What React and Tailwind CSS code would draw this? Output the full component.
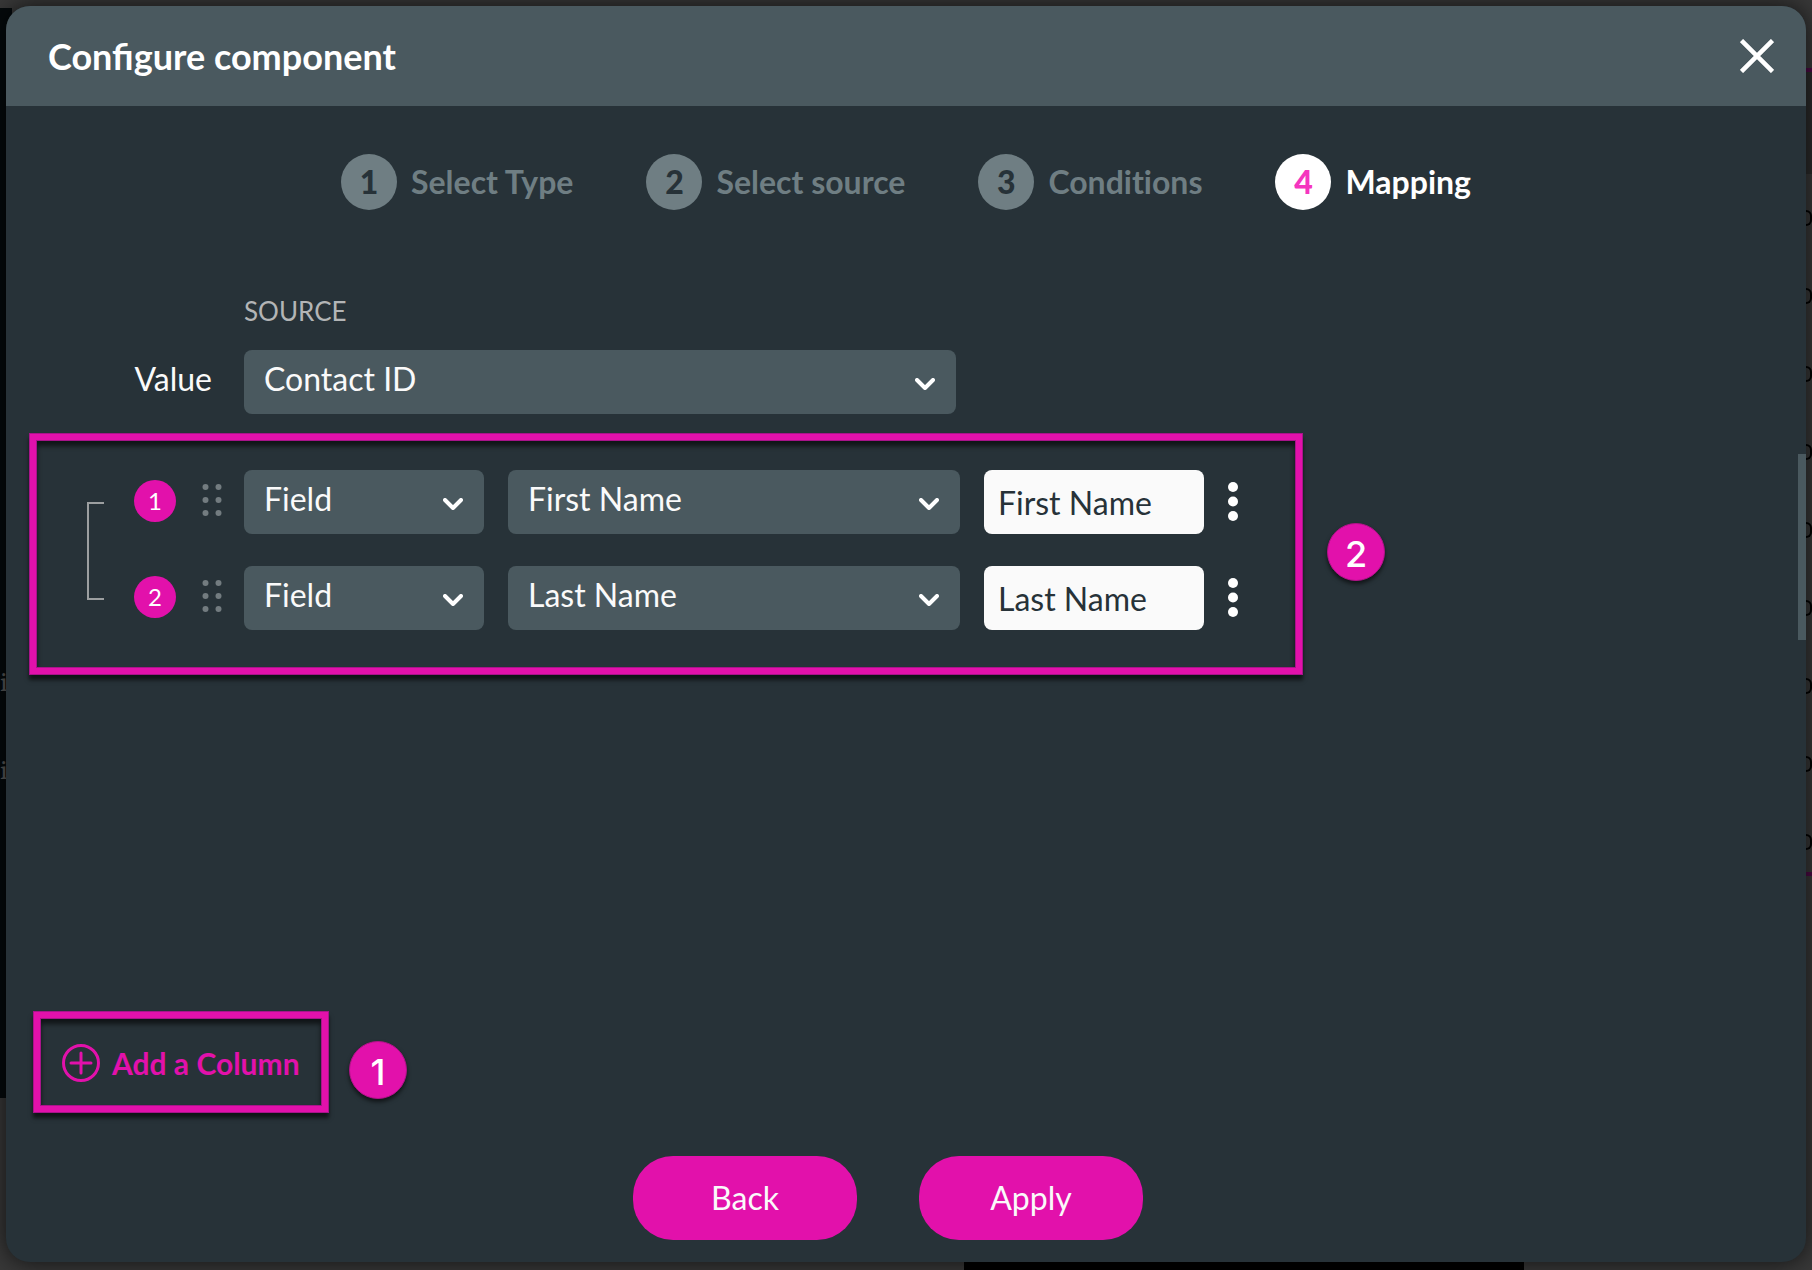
import clsx from 'clsx'

const STEPS = [
  { number: 1, label: 'Select Type' },
  { number: 2, label: 'Select source' },
  { number: 3, label: 'Conditions' },
  { number: 4, label: 'Mapping', active: true },
]

const ROWS = [
  { number: 1, type: 'Field', source: 'First Name', label: 'First Name' },
  { number: 2, type: 'Field', source: 'Last Name', label: 'Last Name' },
]

function Select({ id, label, value, className }) {
  return (
    <div className={clsx('relative', className)}>
      <select
        id={id}
        aria-label={label}
        defaultValue={value}
        className="h-16 w-full appearance-none rounded-lg bg-[#4a595f] pb-1.5 pl-5 pr-16 text-[32px] leading-10 text-[#fafafa]"
      >
        <option>{value}</option>
      </select>
      <svg
        viewBox="0 0 20 12"
        className="pointer-events-none absolute right-[21px] top-7 h-3 w-5"
        fill="none"
        stroke="#fff"
        strokeWidth="4"
        strokeLinecap="round"
        strokeLinejoin="round"
      >
        <path d="M2 2l8 8 8-8" />
      </svg>
    </div>
  )
}

function Callout({ className, children }) {
  return (
    <span
      className={clsx(
        'flex size-[58px] shrink-0 items-center justify-center rounded-full border border-[#b01388] bg-[#e211ab] pt-1 [font-family:Inter,sans-serif] text-[36px] font-medium leading-10 text-white shadow-[0_3px_4px_rgba(0,0,0,0.6)]',
        className
      )}
    >
      {children}
    </span>
  )
}

function Highlight({ className, children }) {
  return (
    <div className={clsx('border border-[#a8148a] shadow-[0_5px_4px_rgba(0,0,0,0.6)]', className)}>
      <div className="h-full border-[6px] border-[#e211ab]">
        <div className="h-full border border-[#a8148a] shadow-[inset_0_5px_5px_rgba(0,0,0,0.6)]">{children}</div>
      </div>
    </div>
  )
}

function Stepper() {
  return (
    <ol className="flex justify-center gap-[73px] pt-12 [font-variant-ligatures:none]">
      {STEPS.map(({ number, label, active }) => (
        <li
          key={number}
          className={clsx(
            'flex items-center gap-[14px] text-[32px] font-bold leading-10',
            active ? 'text-white' : 'text-[#6f7e83]'
          )}
        >
          <span
            className={clsx(
              'flex size-14 items-center justify-center rounded-full font-black',
              active ? 'bg-white text-[#f535bf]' : 'bg-[#6f7e83] text-[#273238]'
            )}
          >
            {number}
          </span>
          {label}
        </li>
      ))}
    </ol>
  )
}

function ColumnRow({ number, type, source, label }) {
  return (
    <li className="flex items-center">
      <span className="mb-0.5 flex size-[42px] items-center justify-center rounded-full bg-[#e211ab] text-2xl text-white">
        {number}
      </span>
      <button aria-label={`Move column ${number}`} className="ml-[26px] pb-1">
        <svg viewBox="0 0 20 32" className="h-8 w-5" fill="#737c80">
          {[3, 16, 29].map((y) => (
            <g key={y}>
              <circle cx="3.5" cy={y} r="3" />
              <circle cx="16.5" cy={y} r="3" />
            </g>
          ))}
        </svg>
      </button>
      <Select label={`Column ${number} type`} value={type} className="ml-[22px] w-60" />
      <Select label={`Column ${number} source`} value={source} className="ml-6 w-[452px]" />
      <input
        aria-label={`Column ${number} label`}
        defaultValue={label}
        className="ml-6 h-16 w-[220px] rounded-lg bg-[#fafafa] px-[14px] text-[32px] leading-10 text-[#273238]"
      />
      <button aria-label={`Column ${number} options`} className="ml-6">
        <svg viewBox="0 0 10 40" className="h-10 w-[10px]" fill="#fff">
          <circle cx="5" cy="5" r="5" />
          <circle cx="5" cy="19.5" r="5" />
          <circle cx="5" cy="34" r="5" />
        </svg>
      </button>
    </li>
  )
}

// Dimmed page that shows round the edges of the dialog
function Backdrop() {
  return (
    <div aria-hidden="true" className="absolute inset-0 overflow-hidden bg-[#383838]">
      <div className="absolute left-0 top-2 h-[1090px] w-3 bg-[#050a0c]" />
      <div className="absolute left-0 top-[666px] flex flex-col gap-[56px] font-serif text-[28px] leading-8 text-[#5a5a5a]">
        <span>i</span>
        <span>i</span>
      </div>
      <div className="absolute bottom-0 left-[964px] h-3 w-[560px] bg-black" />
      <div className="absolute right-0 top-[68px] h-[106px] w-2 border-t-4 border-[#4d0a45] bg-[#2b2b2b]" />
      <div className="absolute right-0 top-[210px] flex flex-col gap-[62px]">
        {[...Array(9)].map((_, i) => (
          <div key={i} className="h-4 w-2 rounded-r-md border-2 border-l-0 border-black" />
        ))}
      </div>
      <div className="absolute right-0 top-[872px] h-1 w-2 bg-[#4d0a45]" />
    </div>
  )
}

export default function App() {
  return (
    <div className="relative flex min-h-screen flex-col px-1.5 pb-2 pt-1.5 [font-family:Lato,sans-serif]">
      <Backdrop />

      <div
        role="dialog"
        aria-labelledby="dialog-title"
        className="relative flex grow flex-col overflow-hidden rounded-3xl bg-[#273238] shadow-[0_0_24px_rgba(0,0,0,0.7)]"
      >
        <header className="flex h-[100px] items-center justify-between bg-[#4a595f] pl-[42px] pr-8">
          <h1 id="dialog-title" className="text-4xl font-bold text-white">
            Configure component
          </h1>
          <button aria-label="Close">
            <svg viewBox="0 0 34 34" className="size-[34px]" stroke="#fff" strokeWidth="4.5">
              <path d="M1.5 1.5l31 31M32.5 1.5l-31 31" />
            </svg>
          </button>
        </header>

        <Stepper />

        {/* Value source */}
        <div className="mt-[81px] grid grid-cols-[206px_712px] gap-x-8">
          <span className="col-start-2 text-[26px] leading-10 text-[#b3b5b6]">SOURCE</span>
          <label htmlFor="value-source" className="mt-5 pb-2 text-right text-[32px] leading-[56px] text-[#fafafa]">
            Value
          </label>
          <Select id="value-source" value="Contact ID" className="mt-[19px]" />
        </div>

        {/* Columns */}
        <div className="ml-[23px] mt-[18px] flex items-center gap-6">
          <Highlight className="h-[242px] w-[1274px]">
            <div className="flex pl-[50px] pt-[29px]">
              <div className="mr-[30px] mt-8 h-[98px] w-[17px] border-2 border-r-0 border-[#9c9fa0]" />
              <ul className="flex flex-col gap-8">
                {ROWS.map((row) => (
                  <ColumnRow key={row.number} {...row} />
                ))}
              </ul>
            </div>
          </Highlight>
          <Callout className="mb-1">2</Callout>
        </div>

        {/* Scroll thumb */}
        <div className="absolute right-0 top-[448px] h-[186px] w-2 bg-[#4a595f]" />

        <div className="ml-[27px] mt-auto flex items-center gap-5">
          <Highlight className="h-[102px] w-[296px]">
            <button className="flex h-full items-center gap-3 pl-[21px] pt-0.5 text-[30px] font-bold leading-10 text-[#e211ab]">
              <svg viewBox="0 0 38 38" className="size-[38px]" fill="none" stroke="currentColor" strokeLinecap="round">
                <circle cx="19" cy="19" r="17.5" strokeWidth="3" />
                <path d="M19 9v20M9 19h20" strokeWidth="3" />
              </svg>
              Add a Column
            </button>
          </Highlight>
          <Callout className="mt-4">1</Callout>
        </div>

        <footer className="mb-[22px] mr-9 mt-[43px] flex justify-center gap-[62px]">
          {['Back', 'Apply'].map((label) => (
            <button key={label} className="h-[84px] w-56 rounded-[40px] bg-[#e211ab] text-[32px] leading-10 text-[#fafafa]">
              {label}
            </button>
          ))}
        </footer>
      </div>
    </div>
  )
}
